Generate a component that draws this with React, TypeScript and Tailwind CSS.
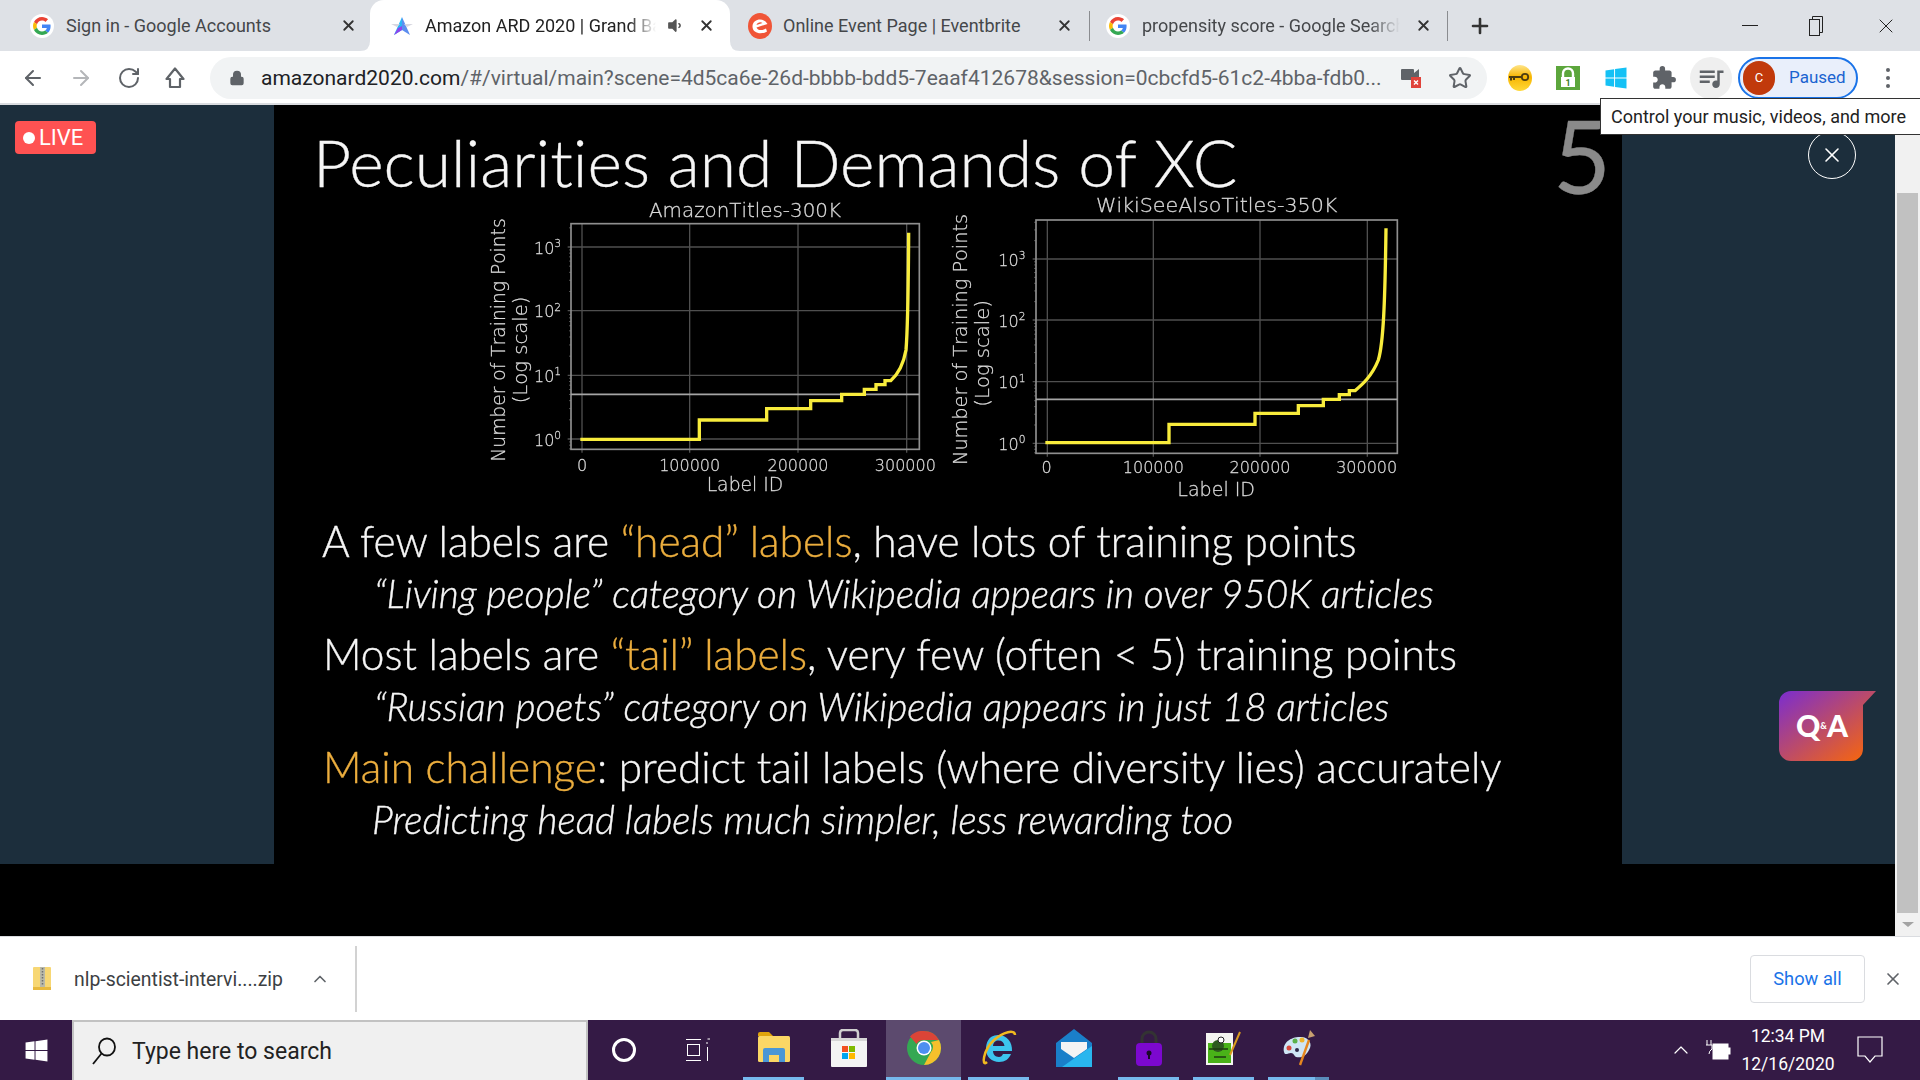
import { ArrowLeft, ArrowRight, ChevronUp, Lock, Plus, RotateCw, Star, X } from "lucide-react";
import { FaVolumeDown, FaWindows } from "react-icons/fa";
import { MdExtension, MdQueueMusic } from "react-icons/md";

const UI = "font-['Roboto','Liberation_Sans',sans-serif]";

/* ─── Small logos ─── */

function GoogleG() {
  return (
    <svg width="24" height="24" viewBox="0 0 48 48">
      <circle cx="24" cy="24" r="24" fill="#fff" />
      <g transform="translate(6 6) scale(0.75)">
        <path fill="#EA4335" d="M24 9.5c3.5 0 6.7 1.2 9.2 3.6l6.9-6.9C35.9 2.4 30.5 0 24 0 14.6 0 6.5 5.4 2.6 13.2l8 6.2C12.5 13.7 17.8 9.5 24 9.5z" />
        <path fill="#4285F4" d="M46.9 24.5c0-1.6-.1-3.1-.4-4.5H24v9h12.9c-.6 3-2.2 5.5-4.7 7.2l7.7 6c4.5-4.2 7-10.3 7-17.7z" />
        <path fill="#FBBC05" d="M10.5 28.6c-.5-1.5-.8-3-.8-4.6s.3-3.1.8-4.6l-8-6.2C.9 16.5 0 20.1 0 24s.9 7.5 2.6 10.8l7.9-6.2z" />
        <path fill="#34A853" d="M24 48c6.5 0 11.9-2.1 15.9-5.8l-7.7-6c-2.2 1.4-4.9 2.3-8.2 2.3-6.2 0-11.5-4.2-13.4-9.9l-8 6.2C6.5 42.6 14.6 48 24 48z" />
      </g>
    </svg>
  );
}

function ArdLogo() {
  return (
    <svg width="24" height="24" viewBox="0 0 24 24">
      <path d="M12 3 L20 21 L12 16 Z" fill="#5b8def" />
      <path d="M12 3 L4 21 L12 16 Z" fill="#29b6f6" />
      <path d="M8 14 L4 21 L12 16 L12 12 Z" fill="#8e44ec" />
      <path d="M1 10 L10 10 L7 13 Z" fill="#d7d7e0" />
      <path d="M23 10 L14 10 L17 13 Z" fill="#d7d7e0" />
    </svg>
  );
}

function EventbriteLogo() {
  return (
    <svg width="24" height="26" viewBox="0 0 24 26">
      <ellipse cx="12" cy="13" rx="12" ry="13" fill="#f05537" />
      <path d="M4.5 13 C5 6.5 13 4.5 17.5 8.5 L19.5 11 L8.5 14.5 C9.5 17.5 14 18 18 15.5 L19 18.5 C13.5 22 4 20.5 4.5 13 Z M8.5 12 L14.5 10 C12.8 8.5 9.2 9.2 8.5 12 Z" fill="#fff" fillRule="evenodd" />
    </svg>
  );
}

function KeyExt() {
  return (
    <svg width="24" height="26" viewBox="0 0 24 26">
      <defs>
        <linearGradient id="keyBg" x1="0" y1="0" x2="0" y2="1">
          <stop offset="0" stopColor="#ffe58a" />
          <stop offset="0.45" stopColor="#f7b500" />
          <stop offset="1" stopColor="#ffd93a" />
        </linearGradient>
      </defs>
      <ellipse cx="12" cy="13" rx="12" ry="13" fill="url(#keyBg)" />
      <circle cx="17" cy="12" r="3.2" fill="none" stroke="#4d3d10" strokeWidth="1.8" />
      <path d="M1 12 H14 M3 12 V15.5 M6 12 V15" stroke="#4d3d10" strokeWidth="2" />
    </svg>
  );
}

function LockExt() {
  return (
    <svg width="24" height="24" viewBox="0 0 24 24">
      <rect width="24" height="24" fill="#5ca63c" />
      <path d="M7 11 V7.5 a5 5 0 0 1 10 0 V11" fill="none" stroke="#fff" strokeWidth="2.4" />
      <rect x="5" y="11" width="14" height="10" fill="#fff" />
      <text x="12" y="20" fontSize="9" fontWeight="700" fill="#3e7d27" textAnchor="middle" fontFamily="Roboto">1</text>
    </svg>
  );
}

function CameraBlocked() {
  return (
    <svg width="22" height="24" viewBox="0 0 22 24">
      <rect x="0" y="3" width="13" height="11" rx="1" fill="#5f6368" />
      <path d="M13 7 L18 3 V12 H13 Z" fill="#5f6368" />
      <rect x="10" y="11" width="10" height="11" fill="#e0423a" />
      <path d="M13 14.5 L17 18.5 M17 14.5 L13 18.5" stroke="#fff" strokeWidth="1.4" />
    </svg>
  );
}

function HomeOutline() {
  return (
    <svg width="20" height="24" viewBox="0 0 20 24" fill="none" stroke="#5f6368" strokeWidth="2.2">
      <path d="M10 2.5 L18.5 13 H15 V21 H5 V13 H1.5 Z" strokeLinejoin="round" />
    </svg>
  );
}

function ZipIcon() {
  return (
    <svg width="18" height="23" viewBox="0 0 18 23">
      <rect x="0" y="0" width="18" height="23" rx="1" fill="#f7d774" />
      <rect x="0" y="20" width="18" height="3" fill="#e8b93e" />
      <rect x="7" y="0" width="5" height="20" fill="#b9b9a8" />
      <path d="M9.5 1 V19" stroke="#6f6f6f" strokeWidth="1.5" strokeDasharray="1.5 1.5" />
    </svg>
  );
}

/* ─── Taskbar icons ─── */

function SearchGlass() {
  return (
    <svg width="26" height="28" viewBox="0 0 26 28" fill="none" stroke="#111" strokeWidth="1.8">
      <ellipse cx="16" cy="10" rx="8" ry="8.5" />
      <path d="M10.5 16.5 L2 27" />
    </svg>
  );
}

function FolderIcon() {
  return (
    <svg width="34" height="34" viewBox="0 0 34 34">
      <path d="M1 3 Q1 1 3 1 H12 L16 5 H1 Z" fill="#e0a40c" />
      <rect x="1" y="5" width="32" height="26" rx="1.5" fill="#fbd765" />
      <path d="M6 31 V19 Q6 17 8 17 H26 Q28 17 28 19 V31 H22 V24 H12 V31 Z" fill="#4a97d6" />
    </svg>
  );
}

function StoreIcon() {
  return (
    <svg width="36" height="38" viewBox="0 0 36 38">
      <path d="M9 10 V4 Q9 1 12 1 H24 Q27 1 27 4 V10" fill="none" stroke="#d0d0d0" strokeWidth="2.5" />
      <rect x="0" y="9" width="36" height="29" rx="1" fill="#f4f4f4" />
      <rect x="0" y="9" width="36" height="3" fill="#d6d6d6" />
      <rect x="11" y="17" width="6" height="6" fill="#f25022" />
      <rect x="18" y="17" width="6" height="6" fill="#7fba00" />
      <rect x="11" y="24" width="6" height="6" fill="#00a4ef" />
      <rect x="18" y="24" width="6" height="6" fill="#ffb900" />
    </svg>
  );
}

function ChromeIcon() {
  return (
    <svg width="34" height="34" viewBox="0 0 34 34">
      <circle cx="17" cy="17" r="17" fill="#34a853" />
      <path d="M17 0 A17 17 0 0 1 32 9 H17 A8 8 0 0 0 9.5 13 L3 5.5 A17 17 0 0 1 17 0 Z" fill="#db4437" />
      <path d="M32 9 A17 17 0 0 1 17 34 L24 21 A8 8 0 0 0 24 11 Z" fill="#f6c02c" />
      <circle cx="17" cy="17" r="7.5" fill="#fff" />
      <circle cx="17" cy="17" r="6" fill="#4d8ff0" />
    </svg>
  );
}

function IeIcon() {
  return (
    <svg width="36" height="36" viewBox="0 0 36 36">
      <path d="M17 5 C7 5 5 14 5 19 C5 27 11 32 18 32 C24 32 28 29 30 24 H22 C21 26 20 27 18 27 C14 27 12 24 12 21 H31 C31.5 12 26 5 17 5 Z M12 16 C12.5 12 14.5 10.5 17.5 10.5 C21 10.5 23 12.5 23.5 16 Z" fill="#3cc4ee" fillRule="evenodd" />
      <path d="M6 32 C0 38 2 20 13 10 C22 2 34 -1 34 5" fill="none" stroke="#f0b91f" strokeWidth="2.5" />
    </svg>
  );
}

function MailIcon() {
  return (
    <svg width="36" height="38" viewBox="0 0 36 38">
      <path d="M18 0 L36 14 V38 H0 V14 Z" fill="#1a7fc9" />
      <path d="M5 13 H31 V20 L18 29 L5 20 Z" fill="#f4f4f4" />
      <path d="M36 17 V38 H6 Z" fill="#29b6ee" />
    </svg>
  );
}

function PurpleLock() {
  return (
    <svg width="26" height="36" viewBox="0 0 26 36">
      <path d="M6 14 V9 a7 7 0 0 1 14 0 V14" fill="none" stroke="#333" strokeWidth="3" />
      <rect x="0" y="13" width="26" height="23" rx="4" fill="#7c08cf" />
      <circle cx="13" cy="23" r="2.5" fill="#1a0a2a" />
      <rect x="12" y="24" width="2" height="5" fill="#1a0a2a" />
    </svg>
  );
}

function NotepadIcon() {
  return (
    <svg width="36" height="34" viewBox="0 0 36 34">
      <rect x="0" y="2" width="27" height="32" fill="#f4f4f0" />
      <rect x="2" y="12" width="23" height="20" fill="#49b218" />
      <ellipse cx="12" cy="15" rx="6" ry="6" fill="#2d5a1e" />
      <circle cx="15" cy="9" r="3" fill="#fff" stroke="#222" />
      <path d="M3 18 H22 M8 26 H20" stroke="#1e3a12" strokeWidth="1.5" />
      <path d="M34 1 L24 24" stroke="#d99a1c" strokeWidth="2" />
    </svg>
  );
}

function PaintIcon() {
  return (
    <svg width="34" height="36" viewBox="0 0 34 36">
      <path d="M2 22 C0 12 10 6 20 7 C27 8 31 14 27 20 C24 26 20 28 14 27 C12 26 12 23 9 23 C6 23 3 26 2 22 Z" fill="#cfe6f5" />
      <circle cx="7" cy="18" r="2.5" fill="#d8483c" />
      <circle cx="13" cy="11" r="2.5" fill="#5bb14a" />
      <circle cx="20" cy="10" r="2.5" fill="#efb42c" />
      <circle cx="15" cy="20" r="2" fill="#2d2a4a" />
      <path d="M18 35 L27 10" stroke="#e6871f" strokeWidth="2.4" />
      <path d="M26 8 L28 0 L33 6 Z" fill="#c8a070" />
    </svg>
  );
}

/* ─── Slide charts ─── */

type ChartProps = {
  width: number;
  title: string;
  titleX: [number, number];
  titleY: number;
  box: [number, number, number, number];
  xs: number[];
  ys: number[];
  threshold: number;
  curve: string;
  tickY: number;
  tickX: [number, number, number, number];
  labelY: number;
  labelX: [number, number];
  yLabelX: [number, number];
  yLabelSpan: [number, number];
  yTickX: number;
};

function Chart(c: ChartProps) {
  const [l, t, r, b] = c.box;
  const decade = c.ys[1] - c.ys[0];
  const minors: number[] = [];
  [...c.ys, c.ys[3] + decade].forEach((y) => {
    [2, 3, 4, 5, 6, 7, 8, 9].forEach((m) => {
      const my = y - Math.log10(m) * decade;
      if (my > t && my < b) minors.push(my);
    });
  });
  const tickLabels = ["0", "100000", "200000", "300000"];
  return (
    <svg width={c.width} height={310} viewBox={`0 0 ${c.width * 3} 930`} className="shrink-0 blur-[0.6px] [font-kerning:none]" fontFamily="'DejaVu Sans', sans-serif" fill="#dadada" stroke="#dadada" strokeWidth="0.8">
      <text x={c.titleX[0]} y={c.titleY} fontSize="56" textLength={c.titleX[1] - c.titleX[0]} lengthAdjust="spacingAndGlyphs">{c.title}</text>
      {c.xs.map((x) => <line key={x} x1={x} x2={x} y1={t} y2={b + 10} stroke="#4f4f4f" strokeWidth="4" />)}
      {c.ys.map((y) => <line key={y} x1={l - 10} x2={r} y1={y} y2={y} stroke="#4f4f4f" strokeWidth="4" />)}
      {minors.map((y) => <line key={y} x1={l - 6} x2={l} y1={y} y2={y} stroke="#777" strokeWidth="2" />)}
      <rect x={l} y={t} width={r - l} height={b - t} fill="none" stroke="#8f8f8f" strokeWidth="5" />
      <line x1={l} x2={r} y1={c.threshold} y2={c.threshold} stroke="#a5a5a5" strokeWidth="5" />
      <path d={c.curve} fill="none" stroke="#f8ec3c" strokeWidth="10" strokeLinejoin="miter" />
      {c.xs.map((x, i) => (
        <text key={x} x={c.tickX[i]} y={c.tickY} fontSize="48" textAnchor="middle">{tickLabels[i]}</text>
      ))}
      <text x={c.labelX[0]} y={c.labelY} fontSize="56" textLength={c.labelX[1] - c.labelX[0]} lengthAdjust="spacingAndGlyphs">Label ID</text>
      {c.ys.map((y, i) => (
        <text key={y} x={c.yTickX} y={y + 20} fontSize="48">
          10<tspan fontSize="32" dy="-20">{3 - i}</tspan>
        </text>
      ))}
      <text transform={`translate(${c.yLabelX[0]} ${c.yLabelSpan[1]}) rotate(-90)`} fontSize="56" textLength={c.yLabelSpan[1] - c.yLabelSpan[0]} lengthAdjust="spacingAndGlyphs">Number of Training Points</text>
      <text transform={`translate(${c.yLabelX[1]} ${c.yLabelSpan[1] - 175}) rotate(-90)`} fontSize="56" textLength={320} lengthAdjust="spacingAndGlyphs">(Log scale)</text>
    </svg>
  );
}

/* ─── Browser chrome ─── */

function TabClose({ dim }: { dim?: boolean }) {
  return <X size={17} strokeWidth={2.6} className={dim ? "text-[#555]" : "text-[#333]"} />;
}

function TabTitle({ text, width, dark }: { text: string; width: string; dark?: boolean }) {
  return (
    <span className={`${width} overflow-hidden whitespace-nowrap text-[18px] ${dark ? "text-[#222]" : "text-[#45474a]"} [mask-image:linear-gradient(to_right,black_88%,transparent)]`}>
      {text}
    </span>
  );
}

function Tabs() {
  return (
    <div className="h-[51px] bg-[#dee1e6] flex items-center relative">
      <div className="w-[370px] flex items-center pl-[30px]">
        <GoogleG />
        <span className="w-[12px]" />
        <span className="w-[274px] text-[18px] text-[#45474a] whitespace-nowrap">Sign in - Google Accounts</span>
        <TabClose />
      </div>
      <div className="relative w-[360px] h-[51px] bg-white rounded-t-[14px] flex items-center pl-[20px]">
        <svg width="10" height="10" viewBox="0 0 10 10" className="absolute -left-[10px] bottom-0"><path d="M10 0 V10 H0 Q10 10 10 0 Z" fill="#fff" /></svg>
        <svg width="10" height="10" viewBox="0 0 10 10" className="absolute -right-[10px] bottom-0"><path d="M0 0 V10 H10 Q0 10 0 0 Z" fill="#fff" /></svg>
        <ArdLogo />
        <span className="w-[11px]" />
        <TabTitle text="Amazon ARD 2020 | Grand Bazaar" width="w-[231px]" dark />
        <span className="w-[10px]" />
        <FaVolumeDown size={17} color="#555" />
        <span className="w-[15px]" />
        <TabClose />
      </div>
      <div className="w-[359px] flex items-center pl-[18px] h-[51px]">
        <EventbriteLogo />
        <span className="w-[11px]" />
        <span className="w-[273px] text-[18px] text-[#45474a] whitespace-nowrap">Online Event Page | Eventbrite</span>
        <TabClose />
      </div>
      <div className="w-px h-[30px] bg-[#8a8c90]" />
      <div className="w-[357px] flex items-center pl-[16px]">
        <GoogleG />
        <span className="w-[12px]" />
        <TabTitle text="propensity score - Google Search" width="w-[258px]" />
        <span className="w-[15px]" />
        <TabClose />
      </div>
      <div className="w-px h-[30px] bg-[#8a8c90]" />
      <Plus size={24} strokeWidth={2.6} className="ml-[20px] text-[#333]" />
      <div className="flex-1 flex items-center justify-end pr-[22px] text-[#333] gap-[50px]">
        <span className="w-[16px] h-px bg-[#222]" />
        <svg width="16" height="24" viewBox="0 0 16 24" fill="none" stroke="#222" strokeWidth="1">
          <rect x="1.5" y="5.5" width="10" height="16" fill="#dee1e6" />
          <path d="M4.5 5 V2.5 H14.5 V18.5 H12" />
        </svg>
        <X size={24} strokeWidth={1} className="text-[#222]" />
      </div>
    </div>
  );
}

function Toolbar() {
  return (
    <div className="h-[54px] bg-white border-b-[2px] border-[#dadce0] flex items-center relative pt-[1px]">
      <div className="w-[210px] flex items-center pl-[21px] gap-[24px] text-[#5f6368]">
        <ArrowLeft size={24} strokeWidth={2} />
        <ArrowRight size={24} strokeWidth={2} className="text-[#b4b6b9]" />
        <RotateCw size={24} strokeWidth={2} />
        <HomeOutline />
      </div>
      <div className="w-[1277px] h-[42px] rounded-full bg-[#f1f3f4] flex items-center pl-[19px]">
        <Lock size={16} fill="#5f6368" className="text-[#5f6368]" />
        <span className="ml-[16px] w-[1125px] pt-[2px] text-[21px] whitespace-nowrap overflow-hidden">
          <span className="text-[#202124]">amazonard2020.com</span>
          <span className="text-[#5f6368]">/#/virtual/main?scene=4d5ca6e-26d-bbbb-bdd5-7eaaf412678&session=0cbcfd5-61c2-4bba-fdb0...</span>
        </span>
        <span className="ml-[15px]"><CameraBlocked /></span>
        <Star size={24} strokeWidth={2} className="ml-[25px] text-[#5f6368]" />
      </div>
      <div className="flex items-center">
        <span className="ml-[21px]"><KeyExt /></span>
        <span className="ml-[24px]"><LockExt /></span>
        <span className="ml-[24px]"><FaWindows size={24} color="#14c1f5" /></span>
        <span className="ml-[23px]"><MdExtension size={26} color="#5f6368" /></span>
        <span className="ml-[13px] w-[42px] h-[42px] rounded-full bg-[#efefef] flex items-center justify-center"><MdQueueMusic size={30} color="#5f6368" /></span>
        <div className="ml-[6px] w-[120px] h-[42px] rounded-full border-[2px] border-[#1a73e8] bg-[#e9effb] flex items-center pl-[3px]">
          <span className="w-[32px] h-[34px] rounded-full bg-[#c1390b] text-white text-[13px] flex items-center justify-center">C</span>
          <span className="ml-[14px] text-[17px] text-[#1a63d0]">Paused</span>
        </div>
        <span className="ml-[28px] flex flex-col gap-[4px]">
          <span className="w-[4px] h-[4px] rounded-full bg-[#5f6368]" />
          <span className="w-[4px] h-[4px] rounded-full bg-[#5f6368]" />
          <span className="w-[4px] h-[4px] rounded-full bg-[#5f6368]" />
        </span>
      </div>
    </div>
  );
}

function SlideLine({ pad, children }: { pad: string; children: React.ReactNode }) {
  return <div className={`${pad} h-[44px] leading-[44px] text-[38.8px] italic whitespace-nowrap`}>{children}</div>;
}

function Slide() {
  const orange = "text-[#ecae3e]";
  return (
    <div className="flex-1 bg-black text-[#f6f6f6] font-['Lato',sans-serif] font-light [font-variant-ligatures:none] [-webkit-text-stroke:0.35px]">
      <div className="h-[85px] flex justify-between pl-[39px] pr-[11px] blur-[0.4px]">
        <h1 className="text-[66px] pt-[29px] leading-[56px] whitespace-nowrap font-light">Peculiarities and Demands of XC</h1>
        <span className="text-[100px] leading-[100px] h-[85px] text-[#8a8a8a] font-normal">5</span>
      </div>
      <div className="flex pl-[196px]">
        <Chart
          width={470}
          title="AmazonTitles-300K"
          titleX={[537, 1113]}
          titleY={82}
          box={[303, 101, 1348, 778]}
          xs={[336, 659, 984, 1310]}
          ys={[171, 362, 556, 747]}
          threshold={613}
          curve="M331 748 H688 V690 H890 V656 H1022 V632 H1115 V613 H1183 V598 H1218 V584 H1245 V572 H1262 C1285 552 1300 525 1308 480 C1313 420 1315 300 1316 128"
          tickY={842}
          tickX={[336, 659, 984, 1306]}
          labelY={902}
          labelX={[710, 940]}
          yLabelX={[104, 170]}
          yLabelSpan={[85, 815]}
          yTickX={192}
        />
        <Chart
          width={480}
          title="WikiSeeAlsoTitles-350K"
          titleX={[468, 1192]}
          titleY={67}
          box={[288, 90, 1372, 790]}
          xs={[322, 640, 960, 1282]}
          ys={[207, 390, 575, 760]}
          threshold={628}
          curve="M316 758 H687 V703 H945 V670 H1075 V647 H1150 V628 H1198 V614 H1228 V602 H1245 C1265 585 1295 560 1315 510 C1330 460 1335 340 1338 115"
          tickY={850}
          tickX={[320, 640, 960, 1280]}
          labelY={918}
          labelX={[712, 945]}
          yLabelX={[82, 148]}
          yLabelSpan={[72, 825]}
          yTickX={175}
        />
      </div>
      <div className="pt-[11px] flex flex-col gap-[9px] blur-[0.3px]">
        <div>
          <div className="pl-[48px] h-[60px] leading-[60px] text-[42.4px] whitespace-nowrap">
            A few labels are <span className={orange}>“head” labels</span>, have lots of training points
          </div>
          <SlideLine pad="pl-[100px]">“Living people” category on Wikipedia appears in over 950K articles</SlideLine>
        </div>
        <div>
          <div className="pl-[49px] h-[60px] leading-[60px] text-[42.4px] whitespace-nowrap">
            Most labels are <span className={orange}>“tail” labels</span>, very few (often &lt; 5) training points
          </div>
          <SlideLine pad="pl-[100px]">“Russian poets” category on Wikipedia appears in just 18 articles</SlideLine>
        </div>
        <div>
          <div className="pl-[49px] h-[60px] leading-[60px] text-[42.4px] whitespace-nowrap">
            <span className={orange}>Main challenge</span>: predict tail labels (where diversity lies) accurately
          </div>
          <SlideLine pad="pl-[98px]">Predicting head labels much simpler, less rewarding too</SlideLine>
        </div>
      </div>
    </div>
  );
}

function Page() {
  return (
    <div className="h-[831px] flex relative">
      <div className="flex-1 flex flex-col">
        <div className="h-[759px] flex">
          <div className="w-[274px] bg-[#1c2e3c] pt-[16px] pl-[15px]">
            <div className="w-[81px] h-[33px] bg-[#ff5252] rounded-[4px] flex items-center pl-[8px] gap-[4px] text-white text-[22px]">
              <span className="w-[12px] h-[12px] rounded-full bg-white" />
              LIVE
            </div>
          </div>
          <Slide />
          <div className="w-[273px] bg-[#1c2e3c] relative">
            <div className="absolute left-[186px] top-[26px] w-[48px] h-[48px] rounded-full border border-white flex items-center justify-center">
              <X size={24} strokeWidth={1.6} className="text-white" />
            </div>
            <svg width="97" height="70" viewBox="0 0 97 70" className="absolute left-[157px] top-[586px]">
              <defs>
                <linearGradient id="qa" x1="0" y1="0" x2="1" y2="1">
                  <stop offset="0" stopColor="#7a2dd0" />
                  <stop offset="1" stopColor="#ff6a00" />
                </linearGradient>
              </defs>
              <path d="M12 0 H97 L84 14 V58 A12 12 0 0 1 72 70 H12 A12 12 0 0 1 0 58 V12 A12 12 0 0 1 12 0 Z" fill="url(#qa)" />
              <text x="17" y="46" fill="#fff" fontFamily="Lato" fontWeight="900" fontSize="30">
                Q<tspan fontSize="9" dy="-8">&amp;</tspan><tspan dy="8">A</tspan>
              </text>
            </svg>
          </div>
        </div>
        <div className="flex-1 bg-black" />
      </div>
      <div className="w-[25px] bg-[#f1f1f1] px-[2px] pt-[88px] flex flex-col">
        <div className="h-[720px] bg-[#c1c1c1]" />
        <div className="mt-[9px] mx-auto w-0 h-0 border-l-[6px] border-r-[6px] border-t-[5px] border-l-transparent border-r-transparent border-t-[#a3a3a3]" />
      </div>
    </div>
  );
}

function DownloadBar() {
  return (
    <div className="h-[84px] bg-white border-t-[1px] border-[#dadce0] flex items-center">
      <span className="ml-[33px]"><ZipIcon /></span>
      <span className="ml-[23px] w-[236px] pt-[2px] text-[19.4px] text-[#3c4043] whitespace-nowrap">nlp-scientist-intervi....zip</span>
      <ChevronUp size={20} strokeWidth={2} className="text-[#5f6368]" />
      <span className="ml-[25px] w-[2px] h-[66px] bg-[#d2d2d2]" />
      <span className="ml-auto w-[115px] h-[48px] rounded-[4px] border border-[#dadce0] flex items-center justify-center text-[18.3px] text-[#1a73e8]">Show all</span>
      <X size={20} strokeWidth={2} className="ml-[18px] mr-[17px] text-[#5f6368]" />
    </div>
  );
}

function AppSlot({ children, active, running = true, split }: { children: React.ReactNode; active?: boolean; running?: boolean; split?: boolean }) {
  return (
    <div className={`relative w-[75px] h-[60px] flex items-center justify-center ${active ? "bg-[#5c4a6e]" : ""}`}>
      <span className="pb-[4px]">{children}</span>
      {running && (
        <div className={`absolute bottom-0 h-[3px] flex bg-[#76b9ed] ${active ? "left-0 right-0" : "left-[7px] right-[7px]"}`}>
          {split && <span className="ml-auto w-[14px] bg-[#5a8dbb]" />}
        </div>
      )}
    </div>
  );
}

function Taskbar() {
  return (
    <div className="h-[60px] bg-[#341a45] flex items-center">
      <div className="w-[72px] flex justify-center">
        <FaWindows size={25} color="#fff" />
      </div>
      <div className="w-[516px] h-[60px] bg-[#f0f0f0] border-2 border-b-0 border-[#c2c2c2] flex items-center pl-[17px]">
        <SearchGlass />
        <span className="ml-[15px] pt-[2px] text-[23px] text-[#222]">Type here to search</span>
      </div>
      <div className="w-[72px] flex justify-center">
        <span className="w-[24px] h-[24px] rounded-full border-[3px] border-white" />
      </div>
      <div className="w-[76px] flex justify-center">
        <svg width="24" height="24" viewBox="0 0 24 24" fill="none" stroke="#fff" strokeWidth="1">
          <path d="M0 1.5 H15 M0 22.5 H15 M21.5 1 H24 M21.5 9 V23" />
          <rect x="1.5" y="6.5" width="12" height="11" />
          <path d="M21 4 V6" />
        </svg>
      </div>
      <AppSlot><FolderIcon /></AppSlot>
      <AppSlot running={false}><StoreIcon /></AppSlot>
      <AppSlot active><ChromeIcon /></AppSlot>
      <AppSlot><IeIcon /></AppSlot>
      <AppSlot running={false}><MailIcon /></AppSlot>
      <AppSlot><PurpleLock /></AppSlot>
      <AppSlot><NotepadIcon /></AppSlot>
      <AppSlot split><PaintIcon /></AppSlot>
      <div className="flex-1 flex items-center justify-end text-white">
        <ChevronUp size={24} strokeWidth={1.2} />
        <svg width="26" height="24" viewBox="0 0 26 24" fill="none" stroke="#fff" className="ml-[12px]">
          <path d="M2 2 V7 M6 2 V7 M1 7 H7 V11 Q4 13 4 16" />
          <rect x="8" y="6" width="15" height="15" fill="#fff" />
          <rect x="23" y="10" width="2" height="6" fill="#fff" />
        </svg>
        <div className="ml-[7px] w-[100px] flex flex-col items-center text-[17.5px] leading-[28px]">
          <span>12:34 PM</span>
          <span>12/16/2020</span>
        </div>
        <svg width="26" height="28" viewBox="0 0 26 28" fill="none" stroke="#fff" strokeWidth="1.2" className="ml-[19px] mr-[37px]">
          <path d="M1 1 H25 V20 H18 L13 26 L8 20 H1 Z" />
        </svg>
      </div>
    </div>
  );
}

export default function App() {
  return (
    <div className={`w-[1920px] h-[1080px] overflow-hidden relative ${UI}`}>
      <Tabs />
      <Toolbar />
      <Page />
      <DownloadBar />
      <Taskbar />
      {/* media controls tooltip */}
      <div className="absolute left-[1600px] top-[98px] w-[320px] h-[37px] bg-white border border-[#333] border-r-0 pl-[10px] flex items-center text-[18px] text-[#222] whitespace-nowrap">
        Control your music, videos, and more
      </div>
    </div>
  );
}
